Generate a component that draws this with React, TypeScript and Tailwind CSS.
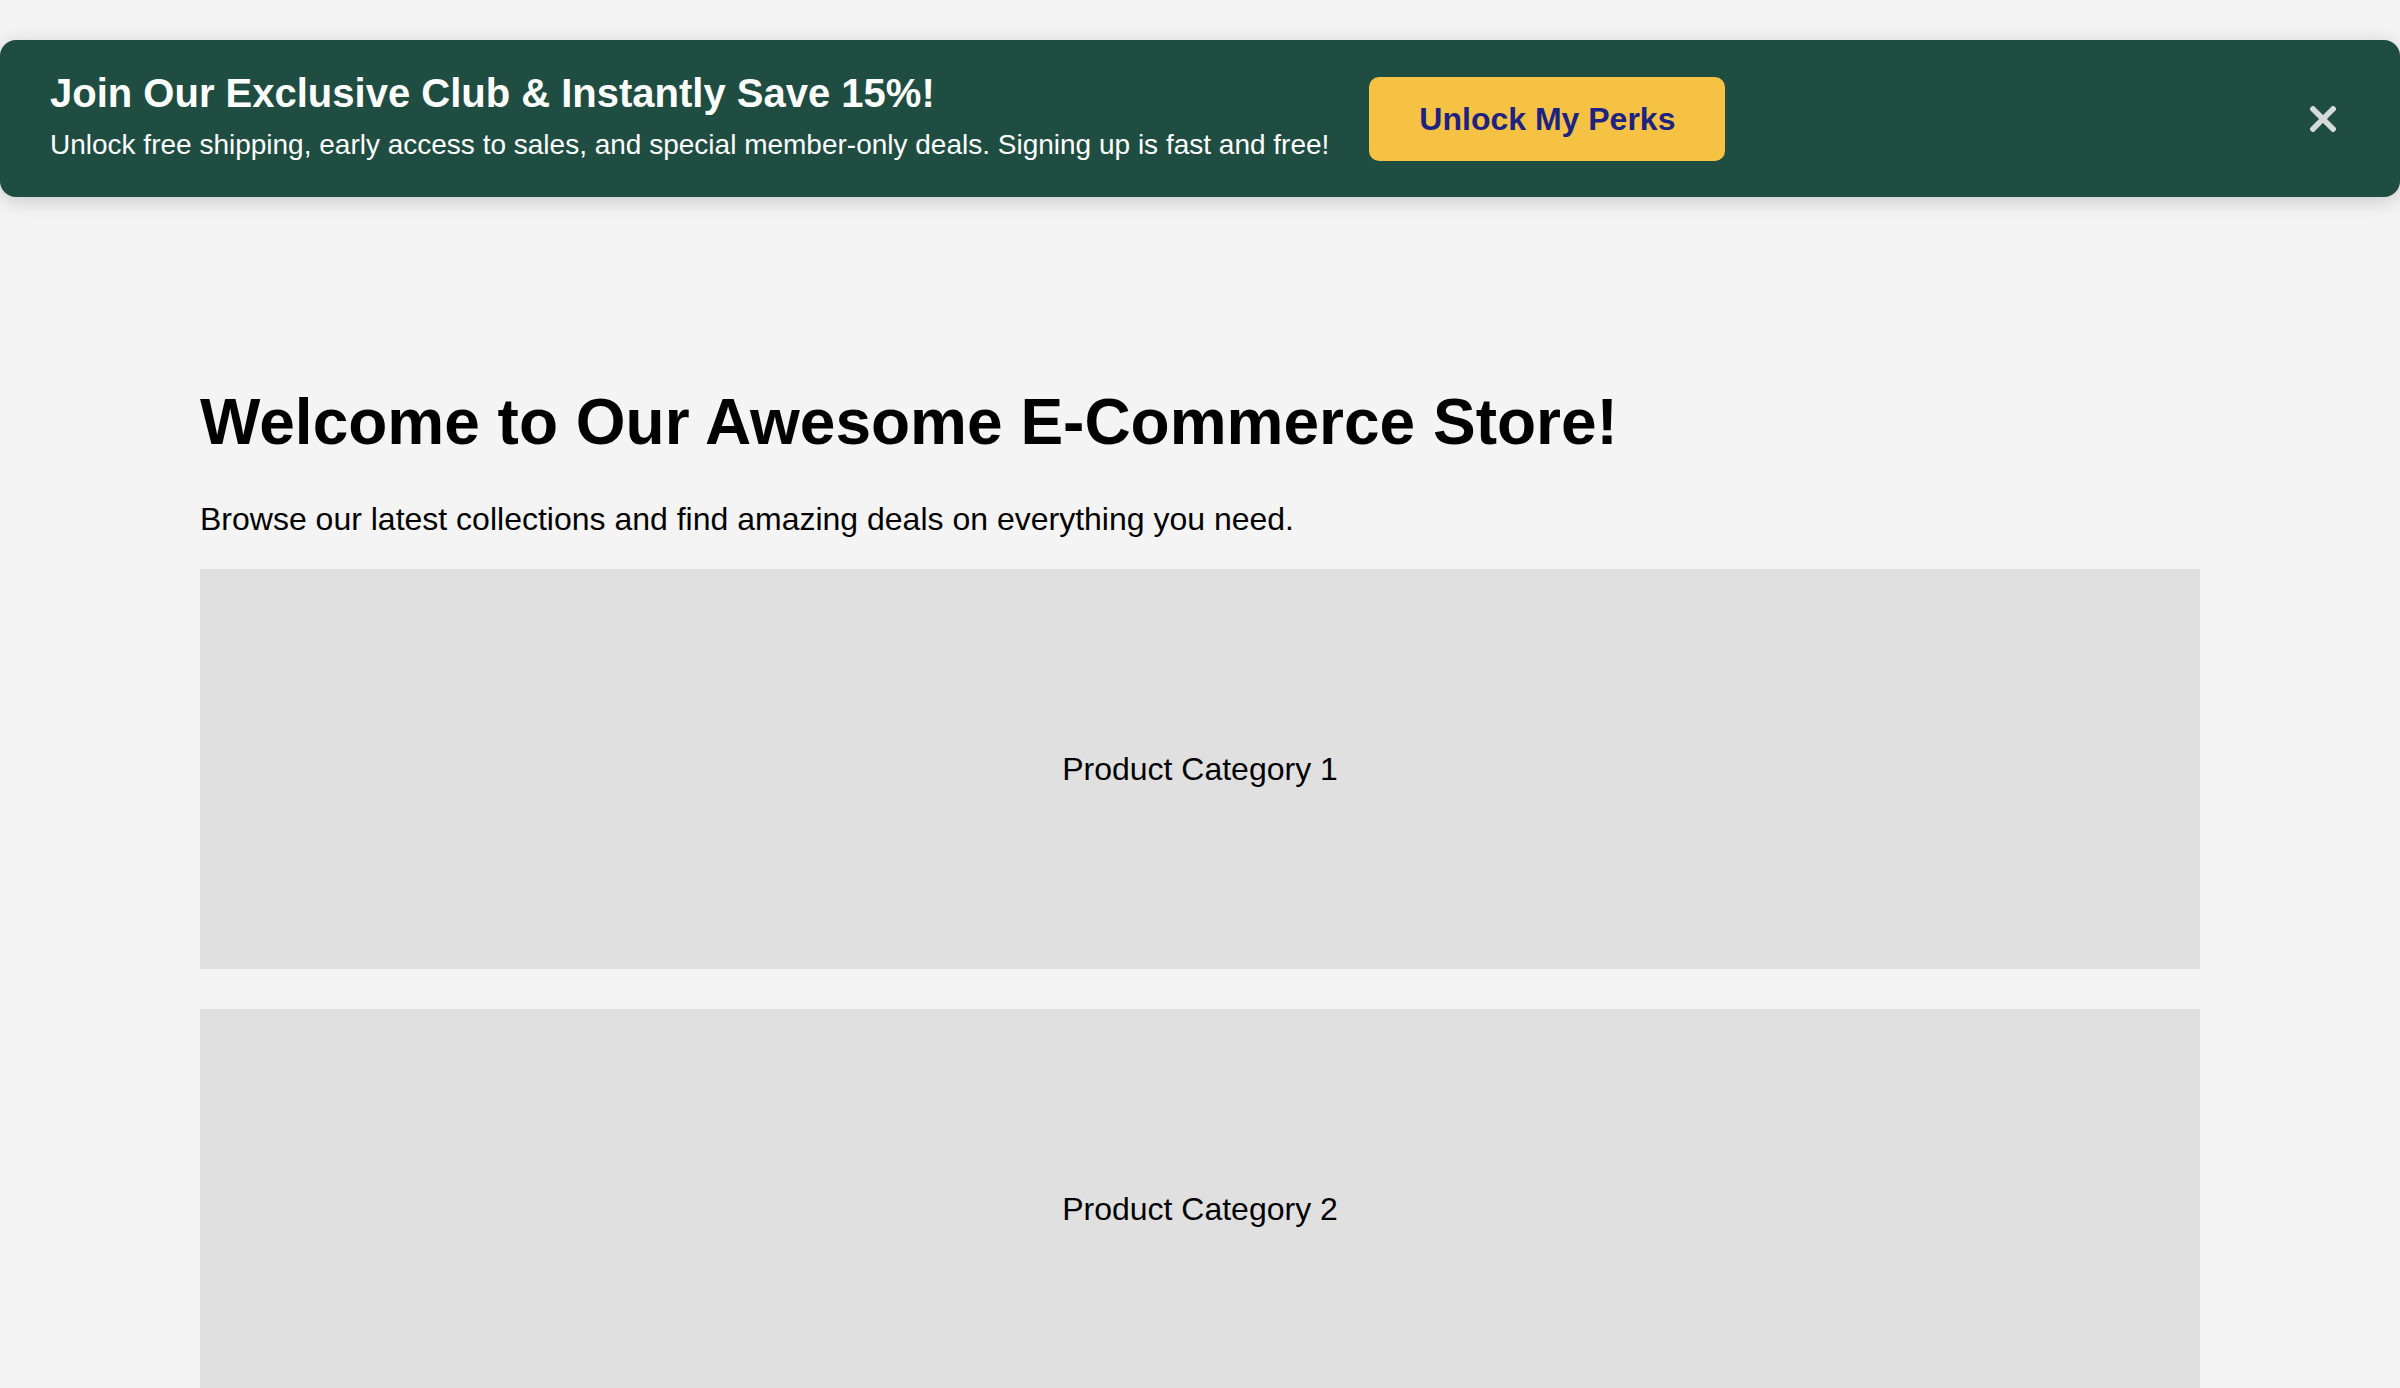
import React from "react";

const categories = ["Product Category 1", "Product Category 2"];

function PromoBanner() {
  return (
    <div className="flex h-[157px] w-full items-start rounded-[16px] bg-[#1f4d42] px-[50px] shadow-[0_4px_20px_rgba(0,0,0,0.18)]">
      <div className="mt-[30px] flex flex-col">
        <h2 className="text-[40px] font-bold leading-[46px] text-white">
          Join Our Exclusive Club &amp; Instantly Save 15%!
        </h2>
        <p className="mt-[13px] text-[28px] leading-[32px] text-white">
          Unlock free shipping, early access to sales, and special member-only deals. Signing up is fast
          and free!
        </p>
      </div>
      <button className="ml-[40px] self-center rounded-[10px] bg-[#f6c244] px-[50px] py-[24px] text-[32px] font-bold leading-[36px] text-[#1e2280]">
        Unlock My Perks
      </button>
      <button
        aria-label="Close"
        className="ml-auto mr-[2px] flex h-[50px] w-[50px] items-center justify-center self-center text-[#d3dcd9]"
      >
        <svg width="26" height="26" viewBox="0 0 26 26">
          <path d="M3 3 L23 23 M23 3 L3 23" stroke="currentColor" strokeWidth="5.5" strokeLinecap="square" />
        </svg>
      </button>
    </div>
  );
}

export default function App() {
  return (
    <div className="min-h-screen bg-[#f4f4f4] pt-[40px] font-['Liberation_Sans',Arial,sans-serif] text-black">
      <PromoBanner />
      <main className="mx-auto w-[2000px] pt-[188px]">
        <h1 className="text-[64px] font-bold leading-[74px]">Welcome to Our Awesome E-Commerce Store!</h1>
        <p className="mt-[42px] text-[32px] leading-[37px]">
          Browse our latest collections and find amazing deals on everything you need.
        </p>
        <div className="mt-[31px] flex flex-col gap-[40px]">
          {categories.map((c) => (
            <div key={c} className="flex h-[400px] items-center justify-center bg-[#e0e0e0] text-[32px]">
              {c}
            </div>
          ))}
        </div>
      </main>
    </div>
  );
}
